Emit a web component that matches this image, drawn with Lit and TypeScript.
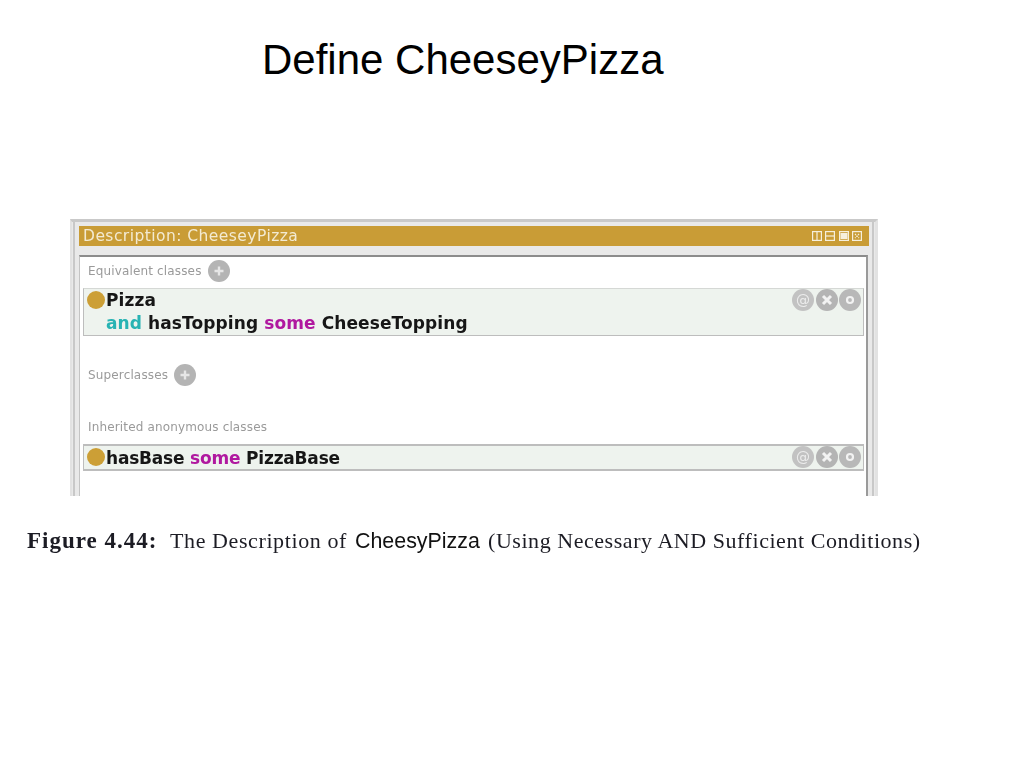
import { LitElement, html, css, svg } from 'lit';
import { customElement } from 'lit/decorators.js';

const plus = html`<svg class="plus" width="22" height="22" viewBox="0 0 22 22">
  <circle cx="11" cy="11" r="11" fill="#b4b4b4" />
  <path d="M11 6.5v9M6.5 11h9" stroke="#e6e6e6" stroke-width="2.4" />
</svg>`;

const rowButtons = html`<div class="buttons">
  <svg width="22" height="22" viewBox="0 0 22 22">
    <circle cx="11" cy="11" r="11" fill="#c2c2c2" />
    <text x="11" y="16" text-anchor="middle" class="at">@</text>
  </svg>
  <svg width="22" height="22" viewBox="0 0 22 22">
    <circle cx="11" cy="11" r="11" fill="#b4b4b4" />
    <path d="M7 7l8 8M15 7l-8 8" stroke="#f2f2f2" stroke-width="3" />
  </svg>
  <svg width="22" height="22" viewBox="0 0 22 22">
    <circle cx="11" cy="11" r="11" fill="#b8b8b8" />
    <circle cx="11" cy="11" r="3" fill="none" stroke="#f2f2f2" stroke-width="2.2" />
  </svg>
</div>`;

const headerIcon = (inner: unknown) => html`<svg width="10" height="10" viewBox="0 0 10 10">
  <rect x="0.6" y="0.6" width="8.8" height="8.8" fill="none" stroke="#f6efdc" stroke-width="1.2" />
  ${inner}
</svg>`;

@customElement('app-root')
export class AppRoot extends LitElement {
  static styles = css`
    :host {
      display: block;
      height: 768px;
      background: #fff;
      overflow: hidden;
      font-family: 'Liberation Sans', Arial, sans-serif;
    }

    .slide-title {
      margin: 0 0 0 262px;
      padding-top: 37px;
      height: 182px;
      box-sizing: border-box;
      font-size: 42px;
      line-height: 46px;
      font-weight: 400;
      color: #000;
      white-space: nowrap;
    }

    .shot {
      margin-left: 70px;
      margin-top: 37px;
      width: 808px;
      height: 277px;
      box-sizing: border-box;
      overflow: hidden;
      background: #e9e9e9;
      border-top: 3px solid #c9c9c9;
      border-left: 2px solid #e2e2e2;
      border-right: 3px solid #e2e2e2;
      box-shadow:
        inset -1px 0 0 #e9e9e9,
        inset -3px 0 0 #c8c8c8,
        inset 1px 0 0 #e9e9e9,
        inset 3px 0 0 #c8c8c8;
      padding: 4px 3px 0 7px;
      filter: blur(0.35px);
      font-family: 'DejaVu Sans', sans-serif;
    }

    .bar {
      display: flex;
      align-items: center;
      justify-content: space-between;
      height: 20px;
      background: #c99c36;
      color: #f3ead2;
      font-size: 15.5px;
      padding: 0 7px 0 4px;
      letter-spacing: 0.45px;
      margin-right: 3px;
    }

    .bar-icons {
      display: flex;
      gap: 3.3px;
    }

    .panel {
      margin-top: 9px;
      height: 260px;
      background: #fff;
      border-top: 2px solid #8c8c8c;
      border-right: 2px solid #9a9a9a;
      border-left: 1px solid #c4c4c4;
      margin-right: 4px;
      padding: 0 2px 0 3px;
    }

    .label {
      display: flex;
      align-items: center;
      gap: 6px;
      height: 22px;
      padding-left: 5px;
      font-size: 12px;
      color: #9a9a9a;
      letter-spacing: 0.15px;
    }

    .label.first {
      margin-top: 3px;
    }

    .label.second {
      margin-top: 28px;
    }

    .label.third {
      margin-top: 30px;
    }

    .row {
      position: relative;
      display: flex;
      margin-top: 6px;
      background: #eef3ee;
      border: 1px solid #bdbdbd;
      border-top-color: #d5d8d5;
      padding-left: 3px;
      font-weight: 700;
      font-size: 17px;
      line-height: 23px;
      letter-spacing: 0.1px;
      color: #161616;
    }

    .row.thin {
      margin-top: 6px;
      border-top: 2px solid #bdbdbd;
      border-bottom: 2px solid #bdbdbd;
      height: 23px;
      line-height: 24px;
      letter-spacing: -0.2px;
    }

    .dot {
      flex: none;
      width: 18px;
      height: 18px;
      margin-top: 2px;
      margin-right: 1px;
      border-radius: 50%;
      background: #cc9f36;
    }

    .expr {
      white-space: nowrap;
    }

    .kw-and {
      color: #27b3b3;
    }

    .kw-some {
      color: #b0189f;
    }

    .buttons {
      position: absolute;
      right: 2px;
      top: 0;
      display: flex;
      gap: 1.5px;
    }

    .at {
      font: 400 14px 'DejaVu Sans', sans-serif;
      fill: #ececec;
    }

    .caption {
      display: flex;
      align-items: baseline;
      margin: 31px 0 0 27px;
      font-family: 'Liberation Serif', serif;
      font-size: 22px;
      line-height: 28px;
      color: #1c1c24;
      white-space: nowrap;
      filter: blur(0.25px);
    }

    .caption b {
      width: 143px;
      font-size: 23px;
      letter-spacing: 1px;
    }

    .caption .desc {
      width: 185px;
      letter-spacing: 0.6px;
    }

    .caption .name {
      width: 133px;
      font-family: 'Liberation Sans', sans-serif;
      font-size: 21.4px;
      color: #111;
    }

    .caption .rest {
      letter-spacing: 0.55px;
    }
  `;

  render() {
    return html`
      <h1 class="slide-title">Define CheeseyPizza</h1>
      <div class="shot">
        <div class="bar">
          <span>Description: CheeseyPizza</span>
          <div class="bar-icons">
            ${headerIcon(svg`<path d="M5 1v8" stroke="#f6efdc" stroke-width="1.2" />`)}
            ${headerIcon(svg`<path d="M1 5h8" stroke="#f6efdc" stroke-width="1.2" />`)}
            ${headerIcon(svg`<rect x="1.5" y="2" width="7" height="6" fill="#f6efdc" />`)}
            ${headerIcon(svg`<path d="M3 3l4 4M7 3l-4 4" stroke="#f6efdc" stroke-width="1.2" stroke-dasharray="1.4 1" />`)}
          </div>
        </div>
        <div class="panel">
          <div class="label first">Equivalent classes ${plus}</div>
          <div class="row">
            <span class="dot"></span>
            <div class="expr">
              Pizza<br />
              <span class="kw-and">and</span> hasTopping <span class="kw-some">some</span> CheeseTopping
            </div>
            ${rowButtons}
          </div>
          <div class="label second">Superclasses ${plus}</div>
          <div class="label third">Inherited anonymous classes</div>
          <div class="row thin">
            <span class="dot"></span>
            <div class="expr">hasBase <span class="kw-some">some</span> PizzaBase</div>
            ${rowButtons}
          </div>
        </div>
      </div>
      <div class="caption">
        <b>Figure 4.44:</b>
        <span class="desc">The Description of</span>
        <span class="name">CheesyPizza</span>
        <span class="rest">(Using Necessary AND Sufficient Conditions)</span>
      </div>
    `;
  }
}
